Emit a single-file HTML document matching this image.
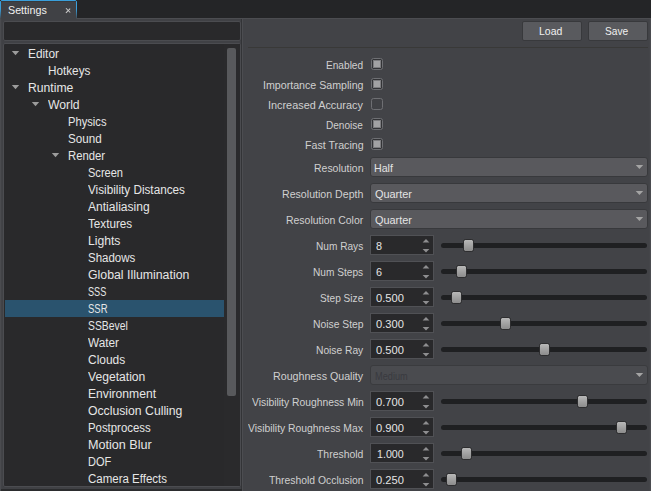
<!DOCTYPE html>
<html><head><meta charset="utf-8"><style>
*{margin:0;padding:0;box-sizing:border-box}
html,body{width:651px;height:491px;overflow:hidden;background:#242527;font-family:"Liberation Sans", sans-serif;font-size:11px;color:#d8d8d8}
div{position:absolute}
.t{white-space:nowrap;line-height:14px;height:14px;transform-origin:0 0}
#main{left:0;top:18px;width:651px;height:473px;background:#404145}
#topline{left:76px;top:18px;width:575px;height:1px;background:#4c4d51}
#tab{left:0;top:0;width:77px;height:19px;background:#404145;border-radius:2px 2px 0 0;overflow:hidden}
#tabtop{left:1px;top:0;width:75px;height:1px;background:#3a9fdb}
#tabl,#tabr{top:1px;width:1px;height:18px;background:linear-gradient(#3a9fdb 0%,#3a9fdb 45%,#3b6f90 75%,#45474b 100%)}
#tabl{left:0}#tabr{left:76px}
#tabin{left:1px;top:1px;width:75px;height:1px;background:#38393c}
#x1,#x2{left:65.3px;top:9.9px;width:6.4px;height:1.1px;background:#cfcfcf;transform:rotate(45deg)}
#x2{transform:rotate(-45deg)}
#search{left:3px;top:21px;width:238px;height:20px;background:#29292b;border:1px solid #4b4c50;border-radius:2px}
#tree{left:3px;top:43px;width:238px;height:444px;background:#29292b;border:1px solid #4b4c50;border-radius:2px}
#split1{left:241px;top:19px;width:1px;height:472px;background:#333437}
#split2{left:242px;top:19px;width:1px;height:472px;background:#4c4d51}
#right{left:243px;top:19px;width:408px;height:472px;background:#424347}
#redge{left:649px;top:19px;width:2px;height:472px;background:linear-gradient(90deg,#444549 0 50%,#4a4b4f 50% 100%)}
#lstrip0{left:0;top:19px;width:1px;height:472px;background:#4a4b4f}
#lstrip1{left:1px;top:19px;width:1px;height:472px;background:#424347}
#lbot{left:1px;top:489px;width:241px;height:2px;background:#2b2c2e}
#sep{left:248px;top:47px;width:400px;height:1px;background:#393938}
.btn{top:21px;width:60px;height:20px;background:#595a5e;border:1px solid #38393c;border-radius:2px}
#thumb{left:227px;top:48px;width:9px;height:348px;background:#58595c;border-radius:2px}
#strack{left:224px;top:44px;width:16px;height:442px;background:#2a2a2c}
.selbar{left:5px;width:219px;height:17px;background:#2a536e}
.arr{width:0;height:0;border-left:3.6px solid transparent;border-right:3.6px solid transparent;border-top:4px solid #9c9c9c}
.cb{left:371px;width:12px;height:12px;border:1px solid #6e6f73;border-radius:2.5px;background:#404145}
.cb.on{background:#333437}
.cbi{left:2px;top:2px;width:6px;height:6px;background:#a2a2a4;box-shadow:0 0 0 1px #7c7c7f}
.combo{left:370px;width:278px;height:20px;background:#59595d;border:1px solid #38393c;border-radius:3px}
.combo.dis{background:#4a4b4f;border-color:#3a3b3e}
.carr{right:3.5px;top:7px;width:0;height:0;border-left:3.75px solid transparent;border-right:3.75px solid transparent;border-top:4px solid #a3a3a3}
.spin{left:370px;width:64px;height:20px;background:#29292b;border:1px solid #505155}
.su{left:52px;top:3px;width:0;height:0;border-left:3.5px solid transparent;border-right:3.5px solid transparent;border-bottom:3.5px solid #8c8c8e}
.sd{left:52px;top:13px;width:0;height:0;border-left:3.5px solid transparent;border-right:3.5px solid transparent;border-top:3.5px solid #8c8c8e}
.track{left:441px;width:206px;height:5px;background:#1f2022;border-radius:3px}
.handle{width:11px;height:13px;background:linear-gradient(#b8b8b8,#8c8c8c);border:1px solid #2d2d2f;border-radius:2.5px}
</style></head><body>
<div id="main"></div><div id="topline"></div>
<div id="lstrip0"></div><div id="lstrip1"></div>
<div id="tab"><div id="tabtop"></div><div id="tabl"></div><div id="tabr"></div><div id="tabin"></div></div><div id="x1"></div><div id="x2"></div>
<div id="search"></div>
<div id="tree"></div>
<div id="strack"></div>
<div id="thumb"></div>
<div id="split1"></div><div id="split2"></div>
<div id="right"></div>
<div id="redge"></div>
<div id="sep"></div><div id="lbot"></div>
<div class="btn" style="left:522px"></div>
<div class="btn" style="left:588px"></div>
<div class="selbar" style="top:300px"></div>
<div class="cb on" style="top:58px"><div class="cbi"></div></div>
<div class="cb on" style="top:78px"><div class="cbi"></div></div>
<div class="cb" style="top:98px"></div>
<div class="cb on" style="top:118px"><div class="cbi"></div></div>
<div class="cb on" style="top:138px"><div class="cbi"></div></div>
<div class="combo" style="top:157px"></div>
<div class="combo" style="top:183px"></div>
<div class="combo" style="top:209px"></div>
<div class="combo dis" style="top:365px"></div>
<div class="spin" style="top:235px"></div>
<div class="track" style="top:243px"></div>
<div class="handle" style="top:239px;left:463px"></div>
<div class="spin" style="top:261px"></div>
<div class="track" style="top:269px"></div>
<div class="handle" style="top:265px;left:456px"></div>
<div class="spin" style="top:287px"></div>
<div class="track" style="top:295px"></div>
<div class="handle" style="top:291px;left:451px"></div>
<div class="spin" style="top:313px"></div>
<div class="track" style="top:321px"></div>
<div class="handle" style="top:317px;left:500px"></div>
<div class="spin" style="top:339px"></div>
<div class="track" style="top:347px"></div>
<div class="handle" style="top:343px;left:539px"></div>
<div class="spin" style="top:391px"></div>
<div class="track" style="top:399px"></div>
<div class="handle" style="top:395px;left:577px"></div>
<div class="spin" style="top:417px"></div>
<div class="track" style="top:425px"></div>
<div class="handle" style="top:421px;left:616px"></div>
<div class="spin" style="top:443px"></div>
<div class="track" style="top:451px"></div>
<div class="handle" style="top:447px;left:461px"></div>
<div class="spin" style="top:469px"></div>
<div class="track" style="top:477px"></div>
<div class="handle" style="top:473px;left:446px"></div>
<svg width="651" height="491" style="position:absolute;left:0;top:0"><polygon points="11.8,50.9 19.2,50.9 15.5,55.3" fill="#9c9c9c"/><polygon points="11.8,84.9 19.2,84.9 15.5,89.3" fill="#9c9c9c"/><polygon points="31.8,101.9 39.2,101.9 35.5,106.3" fill="#9c9c9c"/><polygon points="51.8,152.9 59.2,152.9 55.5,157.3" fill="#9c9c9c"/><polygon points="635.7,164.9 643.2,164.9 639.45,169.0" fill="#a4a4a4"/><polygon points="635.7,190.9 643.2,190.9 639.45,195.0" fill="#a4a4a4"/><polygon points="635.7,216.9 643.2,216.9 639.45,221.0" fill="#a4a4a4"/><polygon points="635.7,372.9 643.2,372.9 639.45,377" fill="#a4a4a4"/><polygon points="422.6,242.4 429.4,242.4 426,239.0" fill="#8e8e90"/><polygon points="422.6,249.0 429.4,249.0 426,252.5" fill="#8e8e90"/><polygon points="422.6,268.4 429.4,268.4 426,265.0" fill="#8e8e90"/><polygon points="422.6,275.0 429.4,275.0 426,278.5" fill="#8e8e90"/><polygon points="422.6,294.4 429.4,294.4 426,291.0" fill="#8e8e90"/><polygon points="422.6,301.0 429.4,301.0 426,304.5" fill="#8e8e90"/><polygon points="422.6,320.4 429.4,320.4 426,317.0" fill="#8e8e90"/><polygon points="422.6,327.0 429.4,327.0 426,330.5" fill="#8e8e90"/><polygon points="422.6,346.4 429.4,346.4 426,343.0" fill="#8e8e90"/><polygon points="422.6,353.0 429.4,353.0 426,356.5" fill="#8e8e90"/><polygon points="422.6,398.4 429.4,398.4 426,395.0" fill="#8e8e90"/><polygon points="422.6,405.0 429.4,405.0 426,408.5" fill="#8e8e90"/><polygon points="422.6,424.4 429.4,424.4 426,421.0" fill="#8e8e90"/><polygon points="422.6,431.0 429.4,431.0 426,434.5" fill="#8e8e90"/><polygon points="422.6,450.4 429.4,450.4 426,447.0" fill="#8e8e90"/><polygon points="422.6,457.0 429.4,457.0 426,460.5" fill="#8e8e90"/><polygon points="422.6,476.4 429.4,476.4 426,473.0" fill="#8e8e90"/><polygon points="422.6,483.0 429.4,483.0 426,486.5" fill="#8e8e90"/></svg>
<div class="t" style="left:27.51px;top:47px;font-size:12px;color:#e6e6e6;transform:scaleX(0.9871)">Editor</div>
<div class="t" style="left:47.52px;top:64px;font-size:12px;color:#e6e6e6;transform:scaleX(0.9774)">Hotkeys</div>
<div class="t" style="left:27.98px;top:81px;font-size:12px;color:#e6e6e6;transform:scaleX(1.0159)">Runtime</div>
<div class="t" style="left:48.00px;top:98px;font-size:12px;color:#e6e6e6;transform:scaleX(1.0161)">World</div>
<div class="t" style="left:67.57px;top:115px;font-size:12px;color:#e6e6e6;transform:scaleX(0.9312)">Physics</div>
<div class="t" style="left:68.00px;top:132px;font-size:12px;color:#e6e6e6;transform:scaleX(0.9706)">Sound</div>
<div class="t" style="left:67.56px;top:149px;font-size:12px;color:#e6e6e6;transform:scaleX(0.9410)">Render</div>
<div class="t" style="left:88.00px;top:166px;font-size:12px;color:#e6e6e6;transform:scaleX(0.9211)">Screen</div>
<div class="t" style="left:88.00px;top:183px;font-size:12px;color:#e6e6e6;transform:scaleX(0.9778)">Visibility Distances</div>
<div class="t" style="left:88.00px;top:200px;font-size:12px;color:#e6e6e6;transform:scaleX(1.0049)">Antialiasing</div>
<div class="t" style="left:88.00px;top:217px;font-size:12px;color:#e6e6e6;transform:scaleX(0.9733)">Textures</div>
<div class="t" style="left:87.99px;top:234px;font-size:12px;color:#e6e6e6;transform:scaleX(1.0135)">Lights</div>
<div class="t" style="left:88.00px;top:251px;font-size:12px;color:#e6e6e6;transform:scaleX(0.9571)">Shadows</div>
<div class="t" style="left:88.00px;top:268px;font-size:12px;color:#e6e6e6;transform:scaleX(1.0265)">Global Illumination</div>
<div class="t" style="left:88.00px;top:285px;font-size:12px;color:#e6e6e6;transform:scaleX(0.7625)">SSS</div>
<div class="t" style="left:88.00px;top:302px;font-size:12px;color:#e6e6e6;transform:scaleX(0.7917)">SSR</div>
<div class="t" style="left:88.00px;top:319px;font-size:12px;color:#e6e6e6;transform:scaleX(0.8630)">SSBevel</div>
<div class="t" style="left:88.00px;top:336px;font-size:12px;color:#e6e6e6;transform:scaleX(0.9812)">Water</div>
<div class="t" style="left:88.00px;top:353px;font-size:12px;color:#e6e6e6;transform:scaleX(0.9973)">Clouds</div>
<div class="t" style="left:88.00px;top:370px;font-size:12px;color:#e6e6e6;transform:scaleX(1.0107)">Vegetation</div>
<div class="t" style="left:87.99px;top:387px;font-size:12px;color:#e6e6e6;transform:scaleX(1.0104)">Environment</div>
<div class="t" style="left:88.00px;top:404px;font-size:12px;color:#e6e6e6;transform:scaleX(1.0185)">Occlusion Culling</div>
<div class="t" style="left:87.55px;top:421px;font-size:12px;color:#e6e6e6;transform:scaleX(0.9482)">Postprocess</div>
<div class="t" style="left:87.85px;top:438px;font-size:12px;color:#e6e6e6;transform:scaleX(1.0500)">Motion Blur</div>
<div class="t" style="left:87.58px;top:455px;font-size:12px;color:#e6e6e6;transform:scaleX(0.9184)">DOF</div>
<div class="t" style="left:88.00px;top:472px;font-size:12px;color:#e6e6e6;transform:scaleX(0.9585)">Camera Effects</div>
<div class="t" style="left:325.89px;top:58px;font-size:10.5px;color:#d0d0d0;transform:scaleX(0.9635)">Enabled</div>
<div class="t" style="left:262.69px;top:78px;font-size:10.5px;color:#d0d0d0;transform:scaleX(1.0133)">Importance Sampling</div>
<div class="t" style="left:267.76px;top:98px;font-size:10.5px;color:#d0d0d0;transform:scaleX(1.0352)">Increased Accuracy</div>
<div class="t" style="left:325.62px;top:118px;font-size:10.5px;color:#d0d0d0;transform:scaleX(0.9583)">Denoise</div>
<div class="t" style="left:304.68px;top:138px;font-size:10.5px;color:#d0d0d0;transform:scaleX(1.0141)">Fast Tracing</div>
<div class="t" style="left:313.65px;top:161px;font-size:10.5px;color:#d0d0d0;transform:scaleX(0.9969)">Resolution</div>
<div class="t" style="left:281.66px;top:187px;font-size:10.5px;color:#d0d0d0;transform:scaleX(1.0105)">Resolution Depth</div>
<div class="t" style="left:285.90px;top:213px;font-size:10.5px;color:#d0d0d0;transform:scaleX(0.9949)">Resolution Color</div>
<div class="t" style="left:272.58px;top:369px;font-size:10.5px;color:#d0d0d0;transform:scaleX(1.0159)">Roughness Quality</div>
<div class="t" style="left:315.81px;top:239px;font-size:10.5px;color:#d0d0d0;transform:scaleX(0.9630)">Num Rays</div>
<div class="t" style="left:375.60px;top:239px;font-size:10.5px;color:#e4e4e4;transform:scaleX(1.0333)">8</div>
<div class="t" style="left:312.82px;top:265px;font-size:10.5px;color:#d0d0d0;transform:scaleX(0.9650)">Num Steps</div>
<div class="t" style="left:375.60px;top:265px;font-size:10.5px;color:#e4e4e4;transform:scaleX(1.0333)">6</div>
<div class="t" style="left:319.70px;top:291px;font-size:10.5px;color:#d0d0d0;transform:scaleX(0.9622)">Step Size</div>
<div class="t" style="left:375.60px;top:291px;font-size:10.5px;color:#e4e4e4;transform:scaleX(1.0615)">0.500</div>
<div class="t" style="left:312.80px;top:317px;font-size:10.5px;color:#d0d0d0;transform:scaleX(0.9843)">Noise Step</div>
<div class="t" style="left:375.60px;top:317px;font-size:10.5px;color:#e4e4e4;transform:scaleX(1.0615)">0.300</div>
<div class="t" style="left:315.72px;top:343px;font-size:10.5px;color:#d0d0d0;transform:scaleX(0.9752)">Noise Ray</div>
<div class="t" style="left:375.60px;top:343px;font-size:10.5px;color:#e4e4e4;transform:scaleX(1.0615)">0.500</div>
<div class="t" style="left:251.80px;top:395px;font-size:10.5px;color:#d0d0d0;transform:scaleX(0.9841)">Visibility Roughness Min</div>
<div class="t" style="left:375.60px;top:395px;font-size:10.5px;color:#e4e4e4;transform:scaleX(1.0654)">0.700</div>
<div class="t" style="left:247.60px;top:421px;font-size:10.5px;color:#d0d0d0;transform:scaleX(0.9863)">Visibility Roughness Max</div>
<div class="t" style="left:375.60px;top:421px;font-size:10.5px;color:#e4e4e4;transform:scaleX(1.0654)">0.900</div>
<div class="t" style="left:317.30px;top:447px;font-size:10.5px;color:#d0d0d0;transform:scaleX(0.9935)">Threshold</div>
<div class="t" style="left:376.58px;top:447px;font-size:10.5px;color:#e4e4e4;transform:scaleX(1.0184)">1.000</div>
<div class="t" style="left:269.20px;top:473px;font-size:10.5px;color:#d0d0d0;transform:scaleX(0.9874)">Threshold Occlusion</div>
<div class="t" style="left:375.60px;top:473px;font-size:10.5px;color:#e4e4e4;transform:scaleX(1.0615)">0.250</div>
<div class="t" style="left:7.90px;top:3px;font-size:10.5px;color:#f0f0f0;transform:scaleX(1.0211)">Settings</div>
<div class="t" style="left:538.50px;top:24px;font-size:10.5px;color:#f0f0f0;transform:scaleX(0.9956)">Load</div>
<div class="t" style="left:605.40px;top:24px;font-size:10.5px;color:#f0f0f0;transform:scaleX(0.9708)">Save</div>
<div class="t" style="left:374.39px;top:161px;font-size:10.5px;color:#e4e4e4;transform:scaleX(1.0134)">Half</div>
<div class="t" style="left:374.70px;top:187px;font-size:10.5px;color:#e4e4e4;transform:scaleX(1.0389)">Quarter</div>
<div class="t" style="left:374.70px;top:213px;font-size:10.5px;color:#e4e4e4;transform:scaleX(1.0389)">Quarter</div>
<div class="t" style="left:374.52px;top:369px;font-size:10.5px;color:#393a3f;transform:scaleX(0.8752)">Medium</div>
</body></html>
